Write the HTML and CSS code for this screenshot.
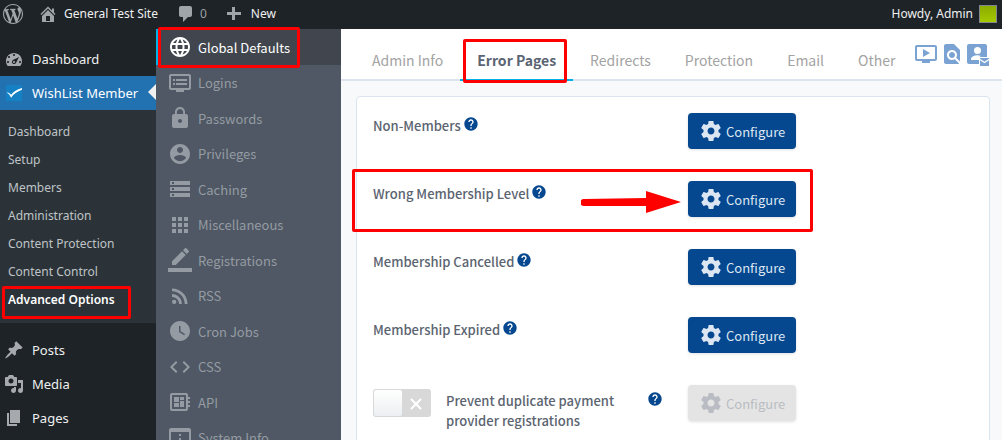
FILE: index.html
```html
<!DOCTYPE html>
<html lang="en">
<head>
<meta charset="utf-8">
<title>Advanced Options - WishList Member</title>
<link rel="stylesheet" href="styles.css">
</head>
<body>
<svg class="sprite" aria-hidden="true">
  <symbol id="gear" viewBox="0 0 24 24"><path d="M19.43 12.98c.04-.32.07-.64.07-.98s-.03-.66-.07-.98l2.11-1.65c.19-.15.24-.42.12-.64l-2-3.46c-.12-.22-.39-.3-.61-.22l-2.49 1c-.52-.4-1.08-.73-1.69-.98l-.38-2.65C14.46 2.18 14.25 2 14 2h-4c-.25 0-.46.18-.49.42l-.38 2.65c-.61.25-1.17.59-1.69.98l-2.49-1c-.23-.09-.49 0-.61.22l-2 3.46c-.13.22-.07.49.12.64l2.11 1.65c-.04.32-.07.65-.07.98s.03.66.07.98l-2.11 1.65c-.19.15-.24.42-.12.64l2 3.46c.12.22.39.3.61.22l2.49-1c.52.4 1.08.73 1.69.98l.38 2.65c.03.24.24.42.49.42h4c.25 0 .46-.18.49-.42l.38-2.65c.61-.25 1.17-.59 1.69-.98l2.49 1c.23.09.49 0 .61-.22l2-3.46c.12-.22.07-.49-.12-.64l-2.11-1.65zM12 15.5c-1.93 0-3.5-1.57-3.5-3.5s1.57-3.5 3.5-3.5 3.5 1.57 3.5 3.5-1.57 3.5-3.5 3.5z"/></symbol>
  <symbol id="help" viewBox="0 0 24 24"><path d="M12 2C6.48 2 2 6.48 2 12s4.48 10 10 10 10-4.48 10-10S17.52 2 12 2zm1 17h-2v-2h2v2zm2.07-7.75l-.9.92C13.45 12.9 13 13.5 13 15h-2v-.5c0-1.1.45-2.1 1.17-2.83l1.24-1.26c.37-.36.59-.86.59-1.41 0-1.1-.9-2-2-2s-2 .9-2 2H8c0-2.21 1.79-4 4-4s4 1.79 4 4c0 .88-.36 1.68-.93 2.25z"/></symbol>
</svg>

<header class="adminbar">
  <a class="bar-item bar-logo" href="#" aria-label="WordPress"><svg class="i20" viewBox="0 0 20 20"><path d="M20 10c0-5.51-4.49-10-10-10C4.48 0 0 4.49 0 10c0 5.52 4.48 10 10 10 5.51 0 10-4.48 10-10zM7.78 15.37L4.37 6.22c.55-.02 1.17-.08 1.17-.08.5-.06.44-1.13-.06-1.11 0 0-1.45.11-2.37.11-.18 0-.37 0-.58-.01C4.12 2.69 6.87 1.11 10 1.11c2.33 0 4.45.87 6.05 2.34-.68-.11-1.65.39-1.65 1.58 0 .74.45 1.36.9 2.1.35.61.55 1.36.55 2.46 0 1.49-1.4 5-1.4 5l-3.03-8.37c.54-.02.82-.17.82-.17.5-.05.44-1.25-.06-1.22 0 0-1.44.12-2.38.12-.87 0-2.33-.12-2.33-.12-.5-.03-.56 1.2-.06 1.22l.92.08 1.26 3.41zM17.41 10c.24-.64.74-1.87.43-4.25.7 1.29 1.05 2.71 1.05 4.25 0 3.29-1.73 6.24-4.4 7.78.97-2.59 1.94-5.2 2.92-7.78zM6.1 18.09C3.12 16.65 1.11 13.53 1.11 10c0-1.3.23-2.48.72-3.59C3.25 10.3 4.67 14.2 6.1 18.09zm4.03-6.63l2.58 6.98c-.86.29-1.76.45-2.71.45-.79 0-1.57-.11-2.29-.33.81-2.38 1.62-4.74 2.42-7.1z"/></svg></a>
  <a class="bar-item bar-site" href="#"><svg class="i20" viewBox="0 0 20 20"><path fill-rule="evenodd" d="M16 8.5l1.53 1.53-1.06 1.06L10 4.6l-6.47 6.49-1.06-1.06L10 2.5l4 4v-2h2v4zm-6-2.46l6 5.99V18H4v-5.97zM12 17v-5H8v5h4z"/></svg>General Test Site</a>
  <a class="bar-item bar-comments" href="#"><svg class="i20" viewBox="0 0 20 20"><path d="M5 2h9c1.1 0 2 .9 2 2v7c0 1.1-.9 2-2 2h-2l-5 5v-5H5c-1.1 0-2-.9-2-2V4c0-1.1.9-2 2-2z"/></svg><span>0</span></a>
  <a class="bar-item bar-new" href="#"><svg class="i14" viewBox="0 0 14 14"><path d="M5 0h3v5h6v3H8v5H5V8H0V5h5z"/></svg>New</a>
  <a class="bar-item bar-user" href="#">Howdy, Admin<span class="avatar"></span></a>
</header>

<div class="layout">
  <nav class="sidebar" aria-label="Main menu">
    <a class="menu-item" href="#"><svg class="i20" viewBox="0 0 20 20"><path d="M3.76 17h12.48C17.34 15.63 18 13.9 18 12c0-4.41-3.58-8-8-8s-8 3.59-8 8c0 1.9.66 3.63 1.76 5zM9 6c0-.55.45-1 1-1s1 .45 1 1c0 .56-.45 1-1 1s-1-.44-1-1zM4 8c0-.55.45-1 1-1s1 .45 1 1c0 .56-.45 1-1 1s-1-.44-1-1zm4.520 3.400c.84-.83 6.51-3.5 6.51-3.500s-2.660 5.680-3.490 6.510c-.84.84-2.180.84-3.020 0-.83-.83-.83-2.180 0-3.010zM3 13c0-.55.45-1 1-1s1 .45 1 1c0 .56-.45 1-1 1s-1-.44-1-1zm6 0c0 .55.45 1 1 1s1-.45 1-1c0-.56-.45-1-1-1s-1 .44-1 1zm6 0c0-.55.45-1 1-1s1 .45 1 1c0 .56-.45 1-1 1s-1-.44-1-1z"/></svg>Dashboard</a>
    <a class="menu-item current" href="#"><svg class="i20" viewBox="0 0 20 20"><rect x="2" y="2" width="16" height="16" fill="#1680c4"/><path d="M2.500 9.500c2.300-.5 3.400.9 4.600 2.300 2.500-3.200 5.600-5.300 10.900-6.800v1.800c-4.800 1.800-8.200 4.100-10.900 8-1.200-2-2-4.300-4.600-5.300z" fill="#fff"/></svg>WishList Member</a>
    <div class="submenu">
      <a href="#">Dashboard</a>
      <a href="#">Setup</a>
      <a href="#">Members</a>
      <a href="#">Administration</a>
      <a href="#">Content Protection</a>
      <a href="#">Content Control</a>
      <a class="selected" href="#">Advanced Options<span class="mark mark-sub"></span></a>
    </div>
    <a class="menu-item" href="#"><svg class="i20" viewBox="0 0 20 20"><path d="M10.440 3.020l1.820-1.820 6.360 6.350-1.830 1.820c-1.050-.68-2.480-.57-3.410.36l-.75.75c-.92.93-1.040 2.350-.35 3.410l-1.830 1.820-2.410-2.410-2.800 2.790c-.42.42-3.380 2.710-3.800 2.290s1.860-3.390 2.280-3.810l2.790-2.790L4.100 9.360l1.830-1.820c1.050.69 2.480.57 3.400-.36l.75-.75c.93-.92 1.050-2.350.36-3.410z"/></svg>Posts</a>
    <a class="menu-item" href="#"><svg class="i20" viewBox="0 0 20 20"><path d="M13 11V4c0-.55-.45-1-1-1h-1.670L9 1H5L3.670 3H2c-.55 0-1 .45-1 1v7c0 .55.45 1 1 1h10c.55 0 1-.45 1-1zM7 4.500c1.380 0 2.500 1.120 2.500 2.500S8.380 9.500 7 9.500 4.500 8.380 4.500 7 5.620 4.500 7 4.500zM14 6h5v10.500c0 1.380-1.120 2.500-2.500 2.500S14 17.880 14 16.500s1.120-2.500 2.500-2.500c.17 0 .34.020.5.050V9h-3V6zm-4 8.050V13h2v3.500c0 1.380-1.120 2.500-2.500 2.500S7 17.880 7 16.500 8.120 14 9.500 14c.17 0 .34.020.5.050z"/></svg>Media</a>
    <a class="menu-item" href="#"><svg class="i20" viewBox="0 0 20 20"><path d="M6 15V2h10v13H6zm-1 1h8v2H3V5h2v11z"/></svg>Pages</a>
  </nav>

  <nav class="sections" aria-label="Advanced options sections">
    <a class="active" href="#"><svg class="i24" viewBox="0 0 24 24"><path d="M11.990 2C6.470 2 2 6.480 2 12s4.470 10 9.990 10C17.520 22 22 17.520 22 12S17.520 2 11.990 2zm6.930 6h-2.950c-.32-1.250-.78-2.450-1.380-3.560 1.840.63 3.370 1.910 4.330 3.560zM12 4.040c.83 1.200 1.480 2.530 1.910 3.960h-3.820c.43-1.430 1.080-2.760 1.910-3.960zM4.260 14C4.100 13.360 4 12.690 4 12s.1-1.360.26-2h3.380c-.08.66-.14 1.320-.14 2 0 .68.06 1.340.14 2H4.260zm.82 2h2.950c.32 1.250.78 2.450 1.380 3.560-1.840-.63-3.370-1.900-4.330-3.560zm2.950-8H5.080c.96-1.660 2.490-2.930 4.330-3.560C8.810 5.550 8.350 6.750 8.030 8zM12 19.960c-.83-1.200-1.480-2.530-1.910-3.960h3.820c-.43 1.430-1.080 2.760-1.910 3.960zM14.340 14H9.660c-.09-.66-.16-1.320-.16-2 0-.68.07-1.350.16-2h4.680c.09.65.16 1.320.16 2 0 .68-.07 1.340-.16 2zm.25 5.560c.6-1.110 1.060-2.310 1.380-3.560h2.950c-.96 1.650-2.490 2.930-4.330 3.560zM16.360 14c.08-.66.14-1.320.14-2 0-.68-.06-1.340-.14-2h3.380c.16.64.26 1.310.26 2s-.1 1.360-.26 2h-3.380z"/></svg>Global Defaults<span class="mark mark-section"></span></a>
    <a href="#"><svg class="i24" viewBox="0 0 24 24"><path d="M21 3H3c-1.100 0-2 .9-2 2v12c0 1.100.9 2 2 2h5v2h8v-2h5c1.100 0 1.990-.9 1.990-2L23 5c0-1.100-.9-2-2-2zm0 14H3V5h18v12zm-2-9H8v2h11V8zm0 4H8v2h11v-2zM7 8H5v2h2V8zm0 4H5v2h2v-2z"/></svg>Logins</a>
    <a href="#"><svg class="i24" viewBox="0 0 24 24"><path d="M18 8h-1V6c0-2.760-2.240-5-5-5S7 3.240 7 6v2H6c-1.100 0-2 .9-2 2v10c0 1.100.9 2 2 2h12c1.100 0 2-.9 2-2V10c0-1.100-.9-2-2-2zm-6 9c-1.100 0-2-.9-2-2s.9-2 2-2 2 .9 2 2-.9 2-2 2zm3.100-9H8.900V6c0-1.710 1.390-3.100 3.100-3.100 1.710 0 3.100 1.390 3.100 3.100v2z"/></svg>Passwords</a>
    <a href="#"><svg class="i24" viewBox="0 0 24 24"><path d="M12 2C6.480 2 2 6.480 2 12s4.480 10 10 10 10-4.480 10-10S17.520 2 12 2zm0 3c1.660 0 3 1.340 3 3s-1.340 3-3 3-3-1.340-3-3 1.340-3 3-3zm0 14.200c-2.500 0-4.710-1.280-6-3.220.03-1.990 4-3.080 6-3.080 1.990 0 5.970 1.090 6 3.080-1.290 1.940-3.500 3.220-6 3.220z"/></svg>Privileges</a>
    <a href="#"><svg class="i24" viewBox="0 0 24 24"><path d="M2 20h20v-4H2v4zm2-3h2v2H4v-2zM2 4v4h20V4H2zm4 3H4V5h2v2zm-4 7h20v-4H2v4zm2-3h2v2H4v-2z"/></svg>Caching</a>
    <a href="#"><svg class="i24" viewBox="0 0 24 24"><path d="M4 8h4V4H4v4zm6 12h4v-4h-4v4zm-6 0h4v-4H4v4zm0-6h4v-4H4v4zm6 0h4v-4h-4v4zm6-10v4h4V4h-4zm-6 4h4V4h-4v4zm6 6h4v-4h-4v4zm0 6h4v-4h-4v4z"/></svg>Miscellaneous</a>
    <a href="#"><svg class="i24" viewBox="0 0 24 24"><path d="M17.750 7L14 3.250l-10 10V17h3.750l10-10zm2.960-2.960c.39-.39.39-1.020 0-1.410L18.370.29c-.39-.39-1.020-.39-1.410 0L15 2.250 18.750 6l1.960-1.960zM0 20h24v4H0z"/></svg>Registrations</a>
    <a href="#"><svg class="i24" viewBox="0 0 24 24"><circle cx="6.180" cy="17.820" r="2.180"/><path d="M4 4.440v2.830c7.030 0 12.730 5.700 12.730 12.730h2.830c0-8.590-6.970-15.560-15.560-15.560zm0 5.660v2.830c3.900 0 7.070 3.170 7.070 7.070h2.830c0-5.470-4.430-9.900-9.900-9.900z"/></svg>RSS</a>
    <a href="#"><svg class="i24" viewBox="0 0 24 24"><path d="M12 2C6.500 2 2 6.500 2 12s4.500 10 10 10 10-4.500 10-10S17.500 2 12 2zm4.200 14.200L11 13V7h1.500v5.200l4.500 2.700-.8 1.300z"/></svg>Cron Jobs</a>
    <a href="#"><svg class="i24" viewBox="0 0 24 24"><path d="M9.400 16.600L4.800 12l4.600-4.600L8 6l-6 6 6 6 1.400-1.400zm5.200 0l4.600-4.600-4.600-4.600L16 6l6 6-6 6-1.400-1.400z"/></svg>CSS</a>
    <a href="#"><svg class="i24" viewBox="0 0 24 24"><path d="M22 9V7h-2V5c0-1.100-.9-2-2-2H4c-1.100 0-2 .9-2 2v14c0 1.100.9 2 2 2h14c1.100 0 2-.9 2-2v-2h2v-2h-2v-2h2v-2h-2V9h2zm-4 10H4V5h14v14zM6 13h5v4H6zm6-6h4v3h-4zM6 7h5v5H6zm6 4h4v6h-4z"/></svg>API</a>
    <a href="#"><svg class="i24" viewBox="0 0 24 24"><path fill-rule="evenodd" d="M3 2h18c1.100 0 2 .9 2 2v16c0 1.100-.9 2-2 2H3c-1.100 0-2-.9-2-2V4c0-1.100.9-2 2-2zm0 4v14h18V6zM11 8h2v2h-2zM11 12h2v6h-2z"/></svg>System Info</a>
  </nav>

  <main class="main">
    <div class="topbar">
      <nav class="tabs" aria-label="Global defaults tabs">
        <a href="#">Admin Info</a>
        <a class="active" href="#">Error Pages<span class="mark mark-tab"></span></a>
        <a href="#">Redirects</a>
        <a href="#">Protection</a>
        <a href="#">Email</a>
        <a href="#">Other</a>
      </nav>
      <div class="tools">
        <a href="#" aria-label="Video tutorials"><svg class="i24" viewBox="0 0 24 24"><path d="M21 3H3c-1.110 0-2 .89-2 2v12c0 1.100.89 2 2 2h5v2h8v-2h5c1.100 0 1.990-.9 1.990-2L23 5c0-1.110-.9-2-2-2zm0 14H3V5h18v12zm-5-6l-7 4V7z"/></svg></a>
        <a href="#" aria-label="Documentation"><svg class="i24" viewBox="0 0 24 24"><path d="M20 19.590V8l-6-6H6c-1.100 0-1.990.9-1.990 2L4 20c0 1.100.89 2 1.990 2H18c.45 0 .85-.15 1.190-.4l-4.430-4.430c-.8.52-1.740.83-2.760.83-2.760 0-5-2.240-5-5s2.240-5 5-5 5 2.240 5 5c0 1.020-.31 1.960-.83 2.750L20 19.590zM9 13c0 1.660 1.340 3 3 3s3-1.340 3-3-1.340-3-3-3-3 1.340-3 3z"/></svg></a>
        <a href="#" aria-label="Contact support"><svg class="i24" viewBox="0 0 24 24"><path fill-rule="evenodd" d="M3 2h16c1.100 0 2 .9 2 2v11h-8v7H3c-1.100 0-2-.9-2-2V4c0-1.100.9-2 2-2zm8.500 3a3.500 3.500 0 1 0 0 7 3.500 3.500 0 0 0 0-7zM5 18h8v-3l2-1c-1-.4-2.300-.7-3.500-.7-2.500 0-6.500 1.400-6.500 3.700z"/><path d="M14 16h9v.8l-4.500 3-4.500-3zM14 18.200l4.500 3 4.500-3V24h-9z"/></svg></a>
      </div>
    </div>

    <div class="content">
      <section class="card">
        <div class="row">
          <div class="label">Non-Members<svg class="help"><use href="#help"/></svg></div>
          <div class="action"><button class="btn" type="button"><svg class="i24"><use href="#gear"/></svg>Configure</button></div>
        </div>
        <div class="row">
          <div class="label">Wrong Membership Level<svg class="help"><use href="#help"/></svg></div>
          <div class="action"><button class="btn" type="button"><svg class="i24"><use href="#gear"/></svg>Configure</button></div>
          <span class="mark mark-row"></span>
          <svg class="arrow" viewBox="0 0 100 22" aria-hidden="true"><path d="M3 8L65 7V0l35 11-35 11v-7L3 15a3.500 3.500 0 0 1 0-7z"/></svg>
        </div>
        <div class="row">
          <div class="label">Membership Cancelled<svg class="help"><use href="#help"/></svg></div>
          <div class="action"><button class="btn" type="button"><svg class="i24"><use href="#gear"/></svg>Configure</button></div>
        </div>
        <div class="row">
          <div class="label">Membership Expired<svg class="help"><use href="#help"/></svg></div>
          <div class="action"><button class="btn" type="button"><svg class="i24"><use href="#gear"/></svg>Configure</button></div>
        </div>
        <div class="row">
          <div class="toggle-group">
            <span class="toggle">
              <input type="checkbox" id="dup">
              <svg class="cross" viewBox="0 0 12 12" aria-hidden="true"><path d="M1 1l10 10M11 1L1 11"/></svg>
            </span>
            <label for="dup">Prevent duplicate payment provider registrations</label>
            <svg class="help"><use href="#help"/></svg>
          </div>
          <div class="action"><button class="btn" type="button" disabled><svg class="i24"><use href="#gear"/></svg>Configure</button></div>
        </div>
      </section>
    </div>
  </main>
</div>
</body>
</html>
```
FILE: styles.css
```css
* { box-sizing: border-box; }
html { overflow: hidden; }
body {
  margin: 0;
  height: 100vh;
  display: flex;
  flex-direction: column;
  overflow: hidden;
  font-family: "Noto Sans", "Open Sans", sans-serif;
  font-size: 13px;
  background: #f7f9fb;
}
a { color: inherit; text-decoration: none; }
svg { fill: currentColor; flex: none; display: block; }
.sprite { position: absolute; width: 0; height: 0; }
.i14 { width: 14px; height: 14px; }
.i20 { width: 20px; height: 20px; }
.i24 { width: 24px; height: 24px; }

.mark {
  position: absolute;
  border: 3px solid #fe0000;
  border-radius: 2px;
  z-index: 5;
  pointer-events: none;
}

/* Admin bar */
.adminbar {
  flex: none;
  display: flex;
  align-items: center;
  height: 29px;
  padding: 0 5px 2px 3px;
  background: #1d2327;
  color: #f0f0f1;
  font-size: 12px;
}
.bar-item { display: flex; align-items: center; }
.bar-item svg { color: #a0a5aa; }
.bar-site { margin-left: 15px; gap: 6px; }
.bar-comments { margin-left: 18px; gap: 4px; color: #9ca2a7; }
.bar-new { margin-left: 20px; gap: 10px; }
.bar-user { margin-left: auto; gap: 6px; }
.avatar {
  width: 18px;
  height: 18px;
  border: 1px solid #82878c;
  background: linear-gradient(#8bac00, #a5c900);
}

.layout { flex: 1; display: flex; min-height: 0; }

/* Main menu */
.sidebar {
  flex: none;
  width: 156px;
  padding-top: 13px;
  background: #1d2327;
  color: #f0f0f1;
}
.menu-item {
  position: relative;
  display: flex;
  align-items: center;
  gap: 8px;
  height: 34px;
  padding-left: 4px;
}
.menu-item svg { color: #a7aaad; }
.current { background: #2271b1; color: #fff; }
.current::after {
  content: "";
  position: absolute;
  right: 0;
  top: 8px;
  border: 8px solid transparent;
  border-right-color: #f0f0f1;
  border-left-width: 0;
}
.submenu {
  display: flex;
  flex-direction: column;
  padding: 8px 0 9px;
  margin-bottom: 10px;
  background: #2c3338;
  color: #bfc3c7;
  font-size: 12px;
}
.submenu a {
  position: relative;
  height: 28px;
  padding-left: 8px;
  line-height: 28px;
}
.submenu .selected { color: #fff; font-weight: 600; }
.mark-sub { left: 2px; top: 0; width: 129px; height: 33px; }

/* Section menu */
.sections {
  flex: none;
  width: 185px;
  background: #4f5864;
  color: #959ba3;
  font-family: "Noto Sans CJK SC", "Noto Sans", sans-serif;
}
.sections a {
  position: relative;
  display: flex;
  align-items: center;
  gap: 6px;
  height: 35px;
  padding-left: 12px;
}
.sections a:nth-child(odd) { height: 36px; }
.sections .active {
  background: #41464e;
  color: #fff;
  box-shadow: inset 2px 0 #00b0e8;
}
.mark-section { left: 2px; top: -2px; width: 142px; height: 41px; }

/* Content */
.main {
  flex: 1;
  min-width: 0;
  display: flex;
  flex-direction: column;
  font-family: "Noto Sans CJK SC", "Noto Sans", sans-serif;
}
.topbar {
  flex: none;
  display: flex;
  justify-content: space-between;
  height: 52px;
  padding: 0 12px 0 14px;
  background: #fff;
  border-bottom: 2px solid #dbe4ef;
}
.tabs { display: flex; color: #a3a3a3; font-size: 14px; }
.tabs a {
  position: relative;
  height: 52px;
  padding: 10px 17px 0;
  line-height: 42px;
  white-space: nowrap;
}
.tabs .active {
  color: #5a6473;
  font-weight: 700;
  border-bottom: 2px solid #00b0e8;
}
.mark-tab { left: 3px; top: 10px; width: 104px; height: 44px; }
.tools { display: flex; gap: 2px; padding-top: 13px; color: #7aa3d3; }

.content { flex: 1; min-height: 0; padding: 15px 12px 0 15px; }
.card {
  height: 100%;
  min-height: 380px;
  background: #fff;
  border: 1px solid #dbe5ef;
  border-radius: 4px;
  padding-top: 16px;
}
.row {
  position: relative;
  display: grid;
  grid-template-columns: minmax(0, 1fr) minmax(0, 1fr);
  align-items: start;
  min-height: 68px;
}
.label {
  display: flex;
  gap: 2px;
  padding: 3px 16px;
  color: #5b6470;
  line-height: 20px;
  font-weight: 500;
}
.help { width: 16px; height: 16px; color: #05488f; }
.action { padding: 0 15px; }
.btn {
  display: flex;
  align-items: center;
  gap: 3px;
  height: 36px;
  padding: 0 11px;
  border: 0;
  border-radius: 4px;
  background: #05488f;
  box-shadow: 0 1px 3px rgba(0, 0, 0, .12);
  color: #dce6f2;
  font: inherit;
}
.btn:disabled { background: #e4e4e4; color: #b9bdc3; }
.toggle-group {
  display: flex;
  align-items: flex-start;
  padding: 4px 16px;
  color: #5b6470;
  line-height: 20px;
  font-weight: 500;
}
.toggle-group label { flex: 0 0 200px; margin: 2px 0 0 15px; padding-right: 20px; }
.toggle-group .help { margin: 2px 0 0 1px; }
.toggle { position: relative; flex: none; display: flex; }
.toggle input {
  appearance: none;
  width: 58px;
  height: 28px;
  margin: 0;
  padding: 1px;
  border-radius: 3px;
  background: #d8d8d8;
}
.toggle input::before {
  content: "";
  display: block;
  width: 28px;
  height: 26px;
  border-radius: 2px;
  background: linear-gradient(#fff, #eceff2);
}
.cross {
  position: absolute;
  right: 9px;
  top: 9px;
  width: 12px;
  height: 12px;
  stroke: #fff;
  stroke-width: 2;
  fill: none;
  pointer-events: none;
}
.mark-row { left: -5px; top: -12px; width: 461px; height: 63px; }
.arrow {
  position: absolute;
  left: 224px;
  top: 10px;
  width: 100px;
  height: 22px;
  fill: #fe0000;
}
```
